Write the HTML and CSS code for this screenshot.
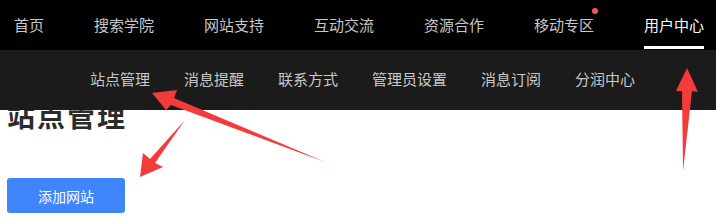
FILE: index.html
```html
<!DOCTYPE html>
<html lang="zh-CN">
<head>
<meta charset="utf-8">
<title>站点管理</title>
<link rel="stylesheet" href="styles.css">
</head>
<body>
<header class="header">
  <nav class="topnav">
    <a class="topnav-item">首页</a>
    <a class="topnav-item">搜索学院</a>
    <a class="topnav-item">网站支持</a>
    <a class="topnav-item">互动交流</a>
    <a class="topnav-item">资源合作</a>
    <a class="topnav-item has-dot">移动专区</a>
    <a class="topnav-item active">用户中心</a>
  </nav>
  <nav class="subnav">
    <a class="subnav-item">站点管理</a>
    <a class="subnav-item">消息提醒</a>
    <a class="subnav-item">联系方式</a>
    <a class="subnav-item">管理员设置</a>
    <a class="subnav-item">消息订阅</a>
    <a class="subnav-item">分润中心</a>
  </nav>
</header>
<main class="main">
  <h1 class="title">站点管理</h1>
  <button class="btn-primary">添加网站</button>
</main>
<svg class="annotations" width="716" height="224" viewBox="0 0 716 224">
  <polygon points="152,93 177,90 174,98 325,162 171,105 166,110"/>
  <polygon points="140,177 143,153 150,159 185,120 155,163 163,167"/>
  <polygon points="687,68 698,92 692,91 683,171 682,91 676,91"/>
</svg>
</body>
</html>
```

FILE: styles.css
```css
* { box-sizing: border-box; }
html, body {
  margin: 0;
  padding: 0;
  background: #fff;
  font-family: "Noto Sans CJK SC", "Noto Sans", sans-serif;
}
body { position: relative; width: 716px; height: 224px; overflow: hidden; }

.header { position: relative; z-index: 1; }

.topnav {
  display: flex;
  gap: 50px;
  height: 50px;
  padding-left: 14px;
  background: #000;
}
.topnav-item {
  position: relative;
  display: flex;
  align-items: center;
  padding-bottom: 2px;
  font-size: 15px;
  color: #c8c8c8;
  white-space: nowrap;
}
.topnav-item.active { color: #fff; }
.topnav-item.active::after {
  content: "";
  position: absolute;
  left: 0;
  right: 0;
  bottom: 1px;
  height: 3px;
  background: #fff;
}
.topnav-item.has-dot::after {
  content: "";
  position: absolute;
  top: 8px;
  right: -4px;
  width: 6px;
  height: 6px;
  border-radius: 50%;
  background: #f2545b;
}

.subnav {
  display: flex;
  align-items: center;
  gap: 34px;
  height: 60px;
  padding-left: 90px;
  padding-bottom: 3px;
  background: #1b1b1b;
}
.subnav-item {
  font-size: 15px;
  color: #c8c8c8;
  white-space: nowrap;
}

.main { padding-left: 7px; }
.title {
  margin: -13px 0 0;
  font-size: 28px;
  line-height: 36px;
  letter-spacing: 2px;
  font-weight: 700;
  color: #2b2b2b;
}
.btn-primary {
  display: block;
  margin-top: 45px;
  width: 118px;
  height: 35px;
  border: 0;
  border-radius: 3px;
  background: #3f86fb;
  color: #fff;
  font-family: inherit;
  font-size: 14px;
}

.annotations {
  position: absolute;
  left: 0;
  top: 0;
  z-index: 2;
  pointer-events: none;
  fill: #f43b3b;
}
```
